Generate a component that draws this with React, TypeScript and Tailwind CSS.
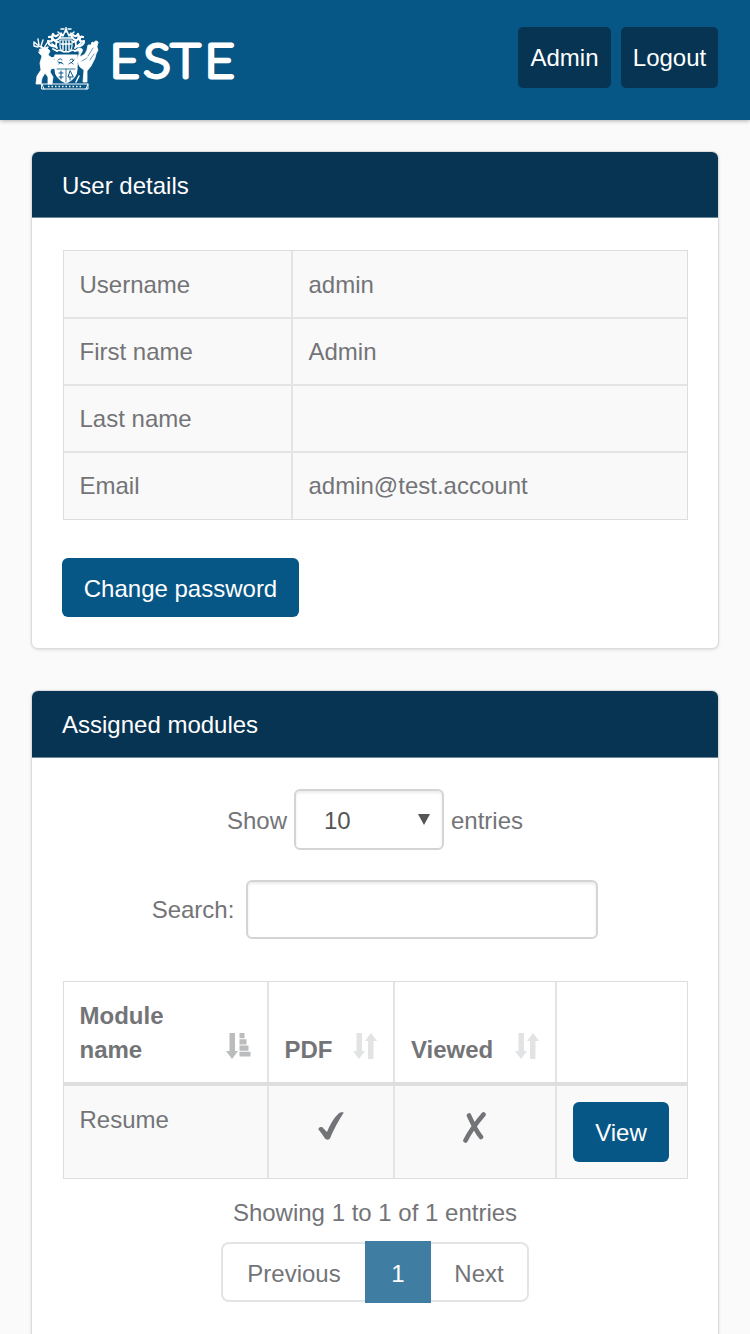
import type { ReactNode } from "react";

function Crest() {
  return (
    <svg className="h-[64px] w-[66px]" viewBox="0 0 66 64" fill="none" stroke="white" strokeWidth="1.2" strokeLinecap="round" strokeLinejoin="round">
      {/* mantling and crown */}
      <path d="M23 19c-4 1-8-1-8-5 3 1 5 0 4-3-1-2-3-1-3-1M25 15c-5-1-7-5-5-8 1 2 3 3 5 1M43 19c4 1 8-1 8-5-3 1-5 0-4-3 1-2 3-1 3-1M40 15c5-1 7-5 5-8-1 2-3 3-5 1" strokeWidth="2.200" />
      <path d="M24 21c-3-3 1-5-1-8 4 0 3-4 6-5M42 21c3-3-1-5 1-8-4 0-3-4-6-5M19 17l5 4M48 16l-6 5M20 22l4 2M46 22l-4 2" strokeWidth="1.800" />
      <path d="M27 11l1-5 2 3 3-7 3 7 2-3 1 5zM28 2h3M35 2h3M33 0v5M25 5l3 3M41 5l-3 3" strokeWidth="1.500" />
      <path d="M27 13h12v6c0 4-3 6-6 6s-6-2-6-6z" />
      <path d="M30 14v9M33 14v10M36 14v9M28 17h10M24 24c4-3 5 3 9 0 4 3 5-3 9 0" strokeWidth="1.400" />
      {/* stag */}
      <path d="M1 15l5 4 5 3M1 15l0 4 4 1M5 12l1 6M10 13l-2 6 3 3M14 16l-3 5M15 20l-4 2" strokeWidth="1.400" />
      <path d="M7 22l7-1 3 3-2 4 4 3 6 5-1 4-6 2-1 3 3 5-1 7h-4l0-7-3-4-3 5-1 6H3l1-8 4-6-1-7 2-7-3-3z" fill="white" strokeWidth=".8" />
      <path d="M15 33l8-3M17 40l7 1" strokeWidth="2" />
      {/* swan */}
      <path d="M65 15c-1-2-4-1-4 1l-2-1-1 3-3 0-1 5-2 4-5 3c0-4 4-6 2-8-2-2-5-1-6 2l3 0c1 4-2 6-2 10l3 6 4 3-1 12h4l0-11 4-5 4-8 1-4 2-4-1-3z" fill="white" strokeWidth=".8" />
      <path d="M55 29l5-8M57 33l4-6M49 34l5-3" stroke="#065686" strokeWidth=".6" />
      <path d="M44 38l-3 3M46 49l-3 6" strokeWidth="1.500" />
      {/* quartered shield */}
      <path d="M22 28h22v14c0 7-4 11-11 14-7-3-11-7-11-14z" fill="white" />
      <path d="M33 42v13M24 42h18" stroke="#065686" strokeWidth=".8" />
      <path d="M25 33c2-2 4-1 4 0M26 37c1-2 3-2 4 0M25 35l4 1M37 33c2-2 4-1 3 1M36 37c1-2 3-2 4 0M41 33l-3 3" stroke="#065686" strokeWidth="1" />
      <path d="M28 44v8M26 46h4M26 50h4M37 44l-2 6h5zM37 50v3" stroke="#065686" strokeWidth="1" />
      {/* motto scroll */}
      <path d="M9 57h46v5H9zM9 57l2 5M55 57l-2 5" strokeWidth="1" />
      <path d="M15 59.500h34" strokeWidth="1.300" strokeDasharray="1.500 2" strokeLinecap="butt" />
    </svg>
  );
}

function Wordmark() {
  return (
    <svg className="ml-2.5 h-[50px] w-[130px] overflow-visible" viewBox="0 0 130 50">
      <text transform="scale(1.1 1)" x="0.9 31.7 56.6 87.4" y="41" fontFamily="Lato, sans-serif" fontSize="45.500" fontWeight="100" fill="white" stroke="white" strokeWidth="4.900" strokeLinejoin="round">ESTE</text>
    </svg>
  );
}

function Card({ title, className, headerClass, children }: { title: string; className: string; headerClass: string; children: ReactNode }) {
  return (
    <section className={`mx-[31px] overflow-hidden rounded-[7px] border border-[#dadcde] bg-white shadow-[0_1px_3px_rgba(0,0,0,0.12)] ${className}`}>
      <h2 className={`flex items-center border-b border-[#6d8798] bg-[#083453] px-[30px] text-2xl text-white ${headerClass}`}>{title}</h2>
      {children}
    </section>
  );
}

function SortBoth() {
  return (
    <svg className="h-[26px] w-[24px] shrink-0" viewBox="0 0 24 26" fill="#e2e3e4">
      <path d="M3.500 0h5.500v18H12l-6 8-6-8h3.500zM15 26h5.500V8H24L18 0l-6 8h3z" />
    </svg>
  );
}

function SortAsc() {
  return (
    <svg className="h-[26px] w-[25px] shrink-0" viewBox="0 0 25 26" fill="#bbbcbd">
      <path d="M3.500 0h5.500v18H12l-6 8-6-8h3.500zM13.500 0h5v5.300h-5zM13.500 6.300h7v5.200h-7zM13.500 12.500h9v5.200h-9zM13.500 18.700h11v4.800h-11z" />
    </svg>
  );
}

const details = [
  ["Username", "admin"],
  ["First name", "Admin"],
  ["Last name", ""],
  ["Email", "admin@test.account"],
];

export default function App() {
  return (
    <div className="h-[1334px] overflow-hidden bg-[#fafafa] font-['Liberation_Sans',Arial,sans-serif] text-2xl leading-[34px] text-[#737477]">
      <header className="flex h-[120px] items-start justify-between bg-[#065686] pl-[33px] pr-8 pt-[27px] shadow-[0_1px_4px_rgba(0,0,0,0.3)]">
        <div className="flex items-start">
          <Crest />
          <div className="pt-[9px]"><Wordmark /></div>
        </div>
        <nav className="flex gap-2.5 text-white">
          <a className="flex h-[61px] w-[93px] items-center justify-center rounded-[5px] bg-[#083453]">Admin</a>
          <a className="flex h-[61px] w-[97px] items-center justify-center rounded-[5px] bg-[#083453]">Logout</a>
        </nav>
      </header>

      <Card title="User details" className="mt-[31px] h-[498px]" headerClass="h-[66px] pt-0.5">
        <div className="px-[30px] pt-8">
          <div className="ml-px border border-b-0 border-[#dcddde] bg-[#f9f9f9]">
            {details.map(([name, value]) => (
              <div key={name} className="flex h-[67px] border-b-2 border-[#e3e4e5] first:h-[68px] first:leading-[36px] last:border-b last:border-[#dcddde]">
                <div className="flex w-[229px] items-start border-r-2 border-[#e3e4e5] pl-[15.500px] pt-4">{name}</div>
                <div className="flex items-start pl-[15.500px] pt-4">{value}</div>
              </div>
            ))}
          </div>
          <button className="mt-[38px] block h-[59px] w-[237px] rounded-[6px] bg-[#065686] pt-0.5 text-white">Change password</button>
        </div>
      </Card>

      <Card title="Assigned modules" className="mt-[41px] h-[700px]" headerClass="h-[67px] pt-px">
        <div className="px-[30px] pt-[31px]">
          <div className="flex h-[61px] items-center justify-center">
            <span className="pt-0.5">Show</span>
            <div className="mx-[7px] flex h-[61px] w-[150px] items-center justify-between rounded-[6px] border-2 border-[#d3d4d5] pl-[28px] pr-[12px] text-[#555] shadow-[inset_0_2px_3px_rgba(0,0,0,0.08)]">
              <span className="pt-0.5">10</span>
              <svg className="h-[11px] w-[12px]" viewBox="0 0 12 11" fill="#555"><path d="M0 0h12L6 11z" /></svg>
            </div>
            <span className="pt-0.5">entries</span>
          </div>
          <div className="mt-[30px] flex h-[59px] items-center justify-center">
            <label>Search:</label>
            <input className="ml-3 h-[59px] w-[352px] rounded-[6px] border-2 border-[#d3d4d5] bg-white shadow-[inset_0_2px_3px_rgba(0,0,0,0.08)]" />
          </div>

          <div className="ml-px mt-[42px] border border-[#dcddde]">
            <div className="grid h-[104px] grid-cols-[205px_126px_162px_1fr] border-b-4 border-[#dedede] font-bold">
              <div className="flex items-end justify-between border-r-2 border-[#e3e4e5] pb-[15px] pl-[15.500px] pr-4">
                <span className="w-[100px]">Module name</span>
                <span className="pb-2"><SortAsc /></span>
              </div>
              <div className="flex items-end justify-between border-r-2 border-[#e3e4e5] pb-[15px] pl-[15.500px] pr-4">
                <span>PDF</span>
                <span className="pb-2"><SortBoth /></span>
              </div>
              <div className="flex items-end justify-between border-r-2 border-[#e3e4e5] pb-[15px] pl-4 pr-4">
                <span>Viewed</span>
                <span className="pb-2"><SortBoth /></span>
              </div>
              <div />
            </div>
            <div className="grid h-[92px] grid-cols-[205px_126px_162px_1fr] bg-[#f9f9f9]">
              <div className="border-r-2 border-[#e3e4e5] pl-[15.500px] pt-[17px]">Resume</div>
              <div className="flex justify-center border-r-2 border-[#e3e4e5] pt-[26px]">
                <svg className="h-[28px] w-[26px]" viewBox="0 0 26 28" fill="#737477">
                  <path d="M.5 17.500C0 15 4 14 5.500 16.500l3.500 3.500C11.500 14 16 5 21 1.200c1.200-1 4.200-1.200 4.700-.4C21 8 15.500 18 12 26.500 11 28 8 28 7 26.500 5 23.500 3 20.500.5 17.500z" />
                </svg>
              </div>
              <div className="flex justify-center border-r-2 border-[#e3e4e5] pr-[2px] pt-[26px]">
                <svg className="h-[31px] w-[23px]" viewBox="0 0 23 31" fill="none" stroke="#737477" strokeWidth="4.600" strokeLinecap="round">
                  <path d="M20.500 2.500C15 9 7 19 2.500 28.500M6 3.500C9 10 13 19 18 25" />
                </svg>
              </div>
              <div className="pl-4 pt-4">
                <button className="block h-[60px] w-[96px] rounded-[6px] bg-[#065686] pt-0.5 text-white">View</button>
              </div>
            </div>
          </div>

          <p className="mt-[17px] text-center">Showing 1 to 1 of 1 entries</p>
          <div className="mt-[11px] flex items-center justify-center">
            <div className="flex h-[60px] w-[144px] items-center justify-center rounded-l-[8px] border-2 border-r-0 border-[#e3e4e5] pt-[3px]">Previous</div>
            <div className="flex h-[62px] w-[66px] items-center justify-center bg-[#407da3] pt-[3px] text-white">1</div>
            <div className="flex h-[60px] w-[98px] items-center justify-center rounded-r-[8px] border-2 border-l-0 border-[#e3e4e5] pt-[3px]">Next</div>
          </div>
        </div>
      </Card>
    </div>
  );
}
